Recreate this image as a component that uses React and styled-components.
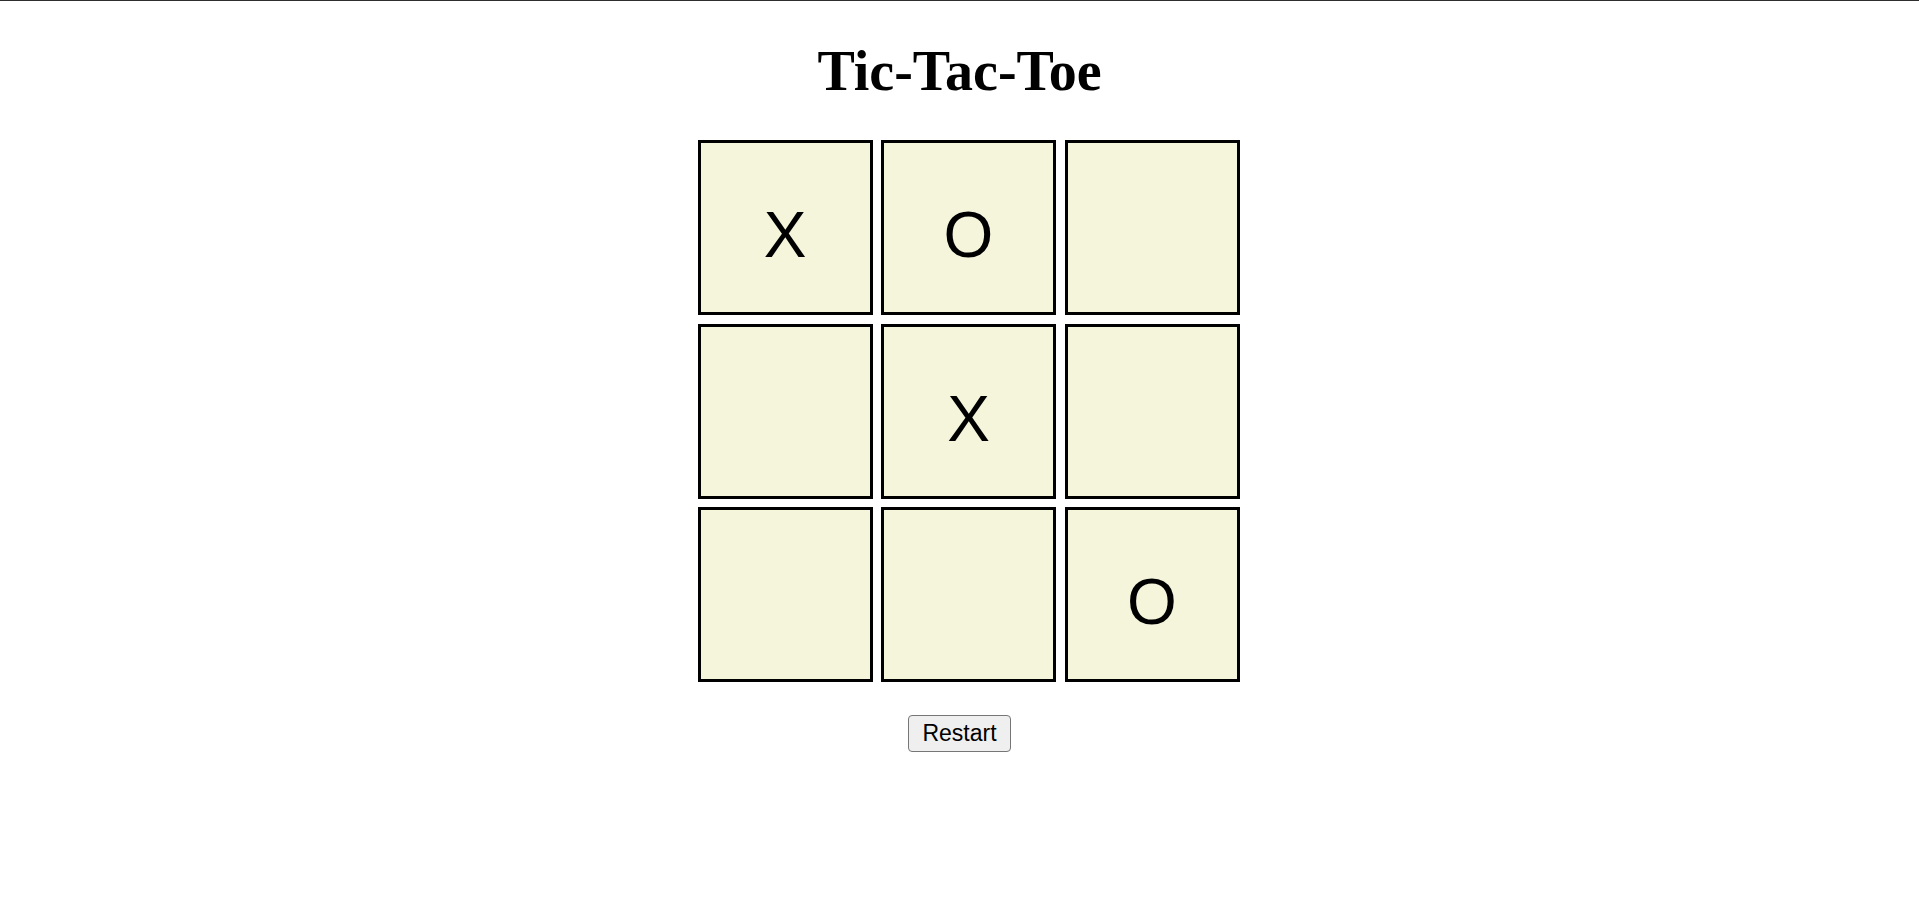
import { useState } from "react";
import styled, { createGlobalStyle } from "styled-components";

const GlobalStyle = createGlobalStyle`
  html, body {
    margin: 0;
    padding: 0;
    background: #ffffff;
  }
  body {
    border-top: 1px solid #2e2e2e;
  }
`;

const StyledPage = styled.div`
  display: flex;
  flex-direction: column;
  align-items: center;
  min-height: 917px;
`;

const StyledTitle = styled.h1`
  margin: 40px 0 0;
  font-family: "Liberation Serif", "Times New Roman", serif;
  font-weight: bold;
  font-size: 56px;
  line-height: 61px;
  color: #000;
`;

const StyledBoard = styled.div`
  display: grid;
  grid-template-columns: repeat(3, 175px);
  grid-auto-rows: 175px;
  gap: 8.5px;
  margin: 38px 0 0 18px;
`;

const StyledCell = styled.div`
  box-sizing: border-box;
  display: flex;
  justify-content: center;
  align-items: center;
  padding-top: 15px;
  border: 3px solid #000;
  background: #f5f5dc;
  font-family: "Liberation Sans", Arial, sans-serif;
  font-size: 64px;
  color: #000;
  cursor: pointer;
  user-select: none;
`;

const StyledRestart = styled.button`
  box-sizing: border-box;
  margin-top: 33px;
  height: 37px;
  padding: 0 13px;
  font-family: "Liberation Sans", Arial, sans-serif;
  font-size: 23px;
  color: #000;
  background: #efefef;
  border: 1px solid #767676;
  border-radius: 4px;
  cursor: pointer;
  &:hover {
    background: #e5e5e5;
  }
`;

const START = ["X", "O", "", "", "X", "", "", "", "O"];

function App() {
  const [cells, setCells] = useState(START);
  const [turn, setTurn] = useState("O");

  function play(i) {
    if (cells[i]) return;
    const next = cells.slice();
    next[i] = turn;
    setCells(next);
    setTurn(turn === "X" ? "O" : "X");
  }

  function restart() {
    setCells(Array(9).fill(""));
    setTurn("X");
  }

  return (
    <>
      <GlobalStyle />
      <StyledPage>
        <StyledTitle>Tic-Tac-Toe</StyledTitle>
        <StyledBoard>
          {cells.map((value, i) => (
            <StyledCell key={i} onClick={() => play(i)}>
              {value}
            </StyledCell>
          ))}
        </StyledBoard>
        <StyledRestart onClick={restart}>Restart</StyledRestart>
      </StyledPage>
    </>
  );
}

export default App;
